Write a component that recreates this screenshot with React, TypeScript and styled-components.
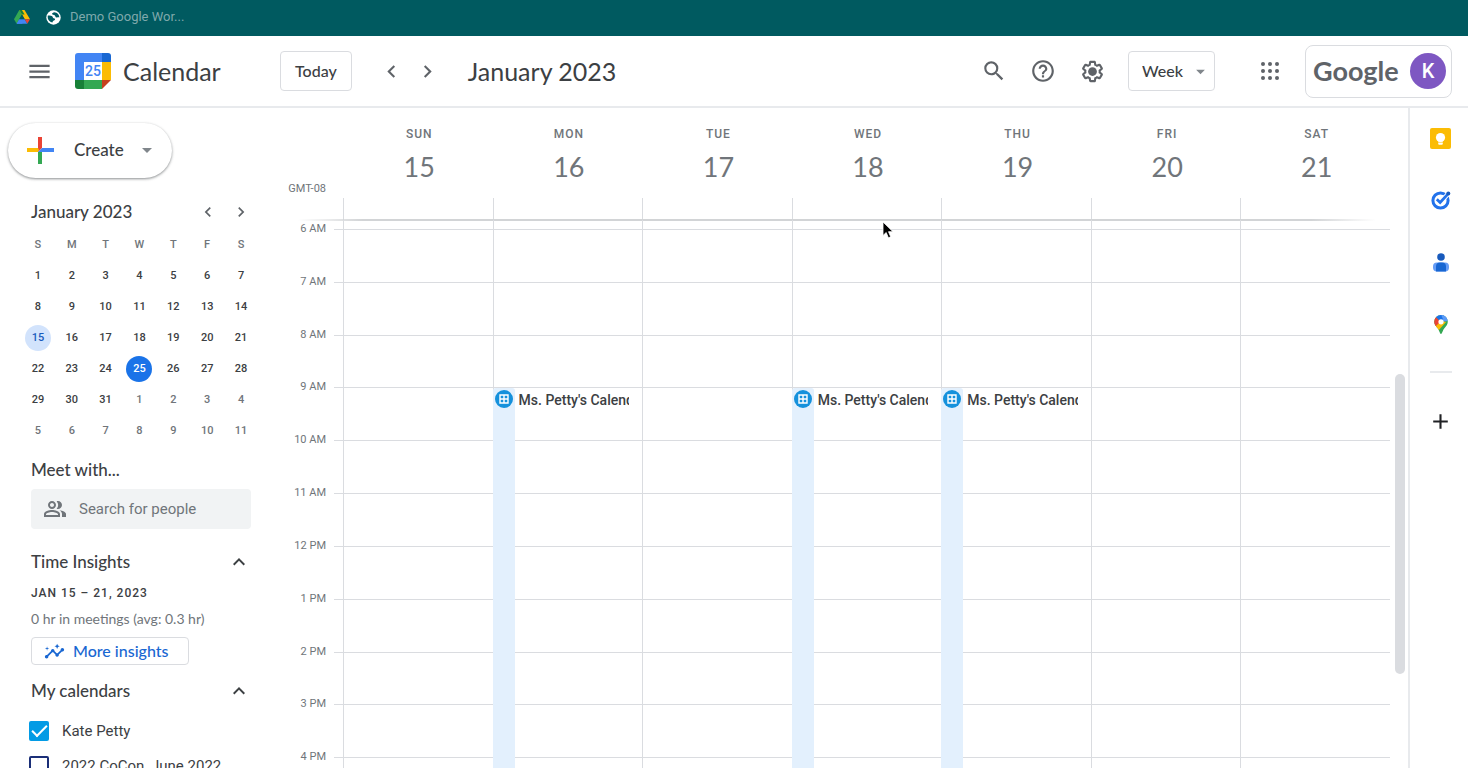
import React from "react";
import styled, { createGlobalStyle } from "styled-components";
import {
  MdSearch,
  MdHelpOutline,
  MdChevronLeft,
  MdChevronRight,
  MdArrowDropDown,
  MdExpandLess,
  MdOutlinePeopleAlt,
  MdInsights,
  MdAdd,
  MdMenu,
} from "react-icons/md";

const display = `Lato, "Open Sans", sans-serif`;
const body = `Roboto, "Liberation Sans", sans-serif`;
const ink = "#3c4043";
const muted = "#70757a";
const line = "#dadce0";

const GlobalStyle = createGlobalStyle`
  *, *::before, *::after { box-sizing: border-box; }
  body { margin: 0; background: #fff; color: ${ink}; font-family: ${body}; }
  button, input, select { font: inherit; color: inherit; }
  button { padding: 0; border: 0; background: none; cursor: pointer; }
  h1, h2, h3, p { margin: 0; font-weight: 400; }
  svg { display: block; flex: none; }
`;

const Page = styled.div`
  display: flex;
  flex-direction: column;
  height: 100vh;
  overflow: hidden;
`;

const BookmarkBar = styled.nav`
  display: flex;
  align-items: center;
  flex: none;
  gap: 16px;
  height: 36px;
  padding: 0 14px 2px;
  background: #005a60;
`;

const Bookmark = styled.a`
  display: flex;
  align-items: center;
  gap: 9px;
  color: #7fa9ac;
  font-size: 13px;
  line-height: 16px;
  text-decoration: none;
`;

const TopBar = styled.header`
  display: flex;
  align-items: center;
  flex: none;
  height: 72px;
  padding: 0 16px 0 27px;
  border-bottom: 2px solid #e8eaed;
`;

const IconButton = styled.button<{ $size?: number; $tone?: string }>`
  display: flex;
  align-items: center;
  justify-content: center;
  flex: none;
  width: ${(p) => p.$size ?? 36}px;
  height: ${(p) => p.$size ?? 36}px;
  color: ${(p) => p.$tone ?? "#5f6368"};
`;

const Brand = styled.div`
  display: flex;
  align-items: center;
  gap: 12px;
  width: 205px;
  margin-left: 24px;
`;

const BrandName = styled.h1`
  font: 400 25px/32px ${display};
`;

const OutlineButton = styled.button`
  display: flex;
  align-items: center;
  justify-content: center;
  height: 40px;
  padding: 0 14px;
  border: 1px solid ${line};
  border-radius: 4px;
  font: 500 16px/20px ${display};
`;

const Pager = styled.div`
  display: flex;
  margin: 0 22px;
`;

const RangeTitle = styled.h2`
  flex: 1;
  font: 400 25px/32px ${display};
  white-space: nowrap;
`;

const Tools = styled.div`
  display: flex;
  align-items: center;
  gap: 13px;
`;

const ViewPicker = styled.div`
  display: grid;
  align-items: center;
  width: 87px;
  height: 40px;
  margin: 0 37px 0 18px;
  border: 1px solid ${line};
  border-radius: 4px;

  > * { grid-area: 1 / 1; }
  > svg { justify-self: end; margin-right: 3px; color: #80868b; pointer-events: none; }
`;

const ViewSelect = styled.select`
  width: 100%;
  height: 100%;
  padding: 0 13px;
  border: 0;
  background: none;
  appearance: none;
  font: 500 16px/20px ${display};
`;

const Account = styled.div`
  display: flex;
  align-items: center;
  justify-content: space-between;
  width: 147px;
  height: 53px;
  margin-left: 17px;
  padding: 0 5px 0 7px;
  border: 1px solid ${line};
  border-radius: 8px;
`;

const Wordmark = styled.span`
  color: #5f6368;
  font: 700 27px/36px ${display};
`;

const Avatar = styled.button`
  width: 36px;
  height: 36px;
  border-radius: 50%;
  background: #7e57c2;
  color: #fff;
  font: 500 20px/36px ${body};
`;

const Content = styled.div`
  display: flex;
  flex: 1;
  min-height: 0;
`;

const Sidebar = styled.aside`
  flex: none;
  width: 280px;
  padding-top: 15px;
  overflow: hidden;
`;

const CreateButton = styled.button`
  display: flex;
  align-items: center;
  width: 164px;
  height: 55px;
  margin-left: 8px;
  padding: 0 13px 1px 19px;
  border-radius: 28px;
  box-shadow: 0 1px 3px rgba(60, 64, 67, 0.4), 0 1px 2px rgba(60, 64, 67, 0.24);
  font: 500 17px/20px ${display};

  > span { flex: 1; margin-left: 20px; text-align: left; }
  > svg:last-child { color: #80868b; }
`;

const MiniHeader = styled.div`
  display: flex;
  align-items: center;
  height: 34px;
  margin-top: 17px;
  padding: 0 23px 0 31px;
`;

const PanelTitle = styled.h3`
  flex: 1;
  font: 500 17px/20px ${display};
`;

const MiniCalendar = styled.table`
  width: 237px;
  margin-left: 21px;
  border-collapse: collapse;
  table-layout: fixed;
  text-align: center;
`;

const WeekdayCell = styled.th`
  height: 31px;
  padding: 0;
  color: ${muted};
  font: 500 11px/16px ${body};
`;

const DateCell = styled.td`
  height: 31px;
  padding: 0;
`;

type DateKind = "normal" | "outside" | "selected" | "today";
const dateTone: Record<DateKind, [string, string]> = {
  normal: [ink, "transparent"],
  outside: [muted, "transparent"],
  selected: ["#185abc", "#d2e3fc"],
  today: ["#fff", "#1a73e8"],
};

const DateButton = styled.button<{ $kind: DateKind }>`
  display: block;
  width: 26px;
  height: 26px;
  margin: 0 auto;
  border-radius: 50%;
  color: ${(p) => dateTone[p.$kind][0]};
  background: ${(p) => dateTone[p.$kind][1]};
  font: 500 11px/26px ${body};
`;

const Panel = styled.section`
  display: flex;
  flex-direction: column;
  align-items: flex-start;
  padding: 0 29px 0 31px;
  margin-top: 14px;
`;

const PanelHeader = styled.div`
  display: flex;
  align-items: center;
  width: 100%;
  height: 20px;
`;

const PeopleSearch = styled.label`
  display: flex;
  align-items: center;
  gap: 12px;
  width: 100%;
  height: 40px;
  margin: 9px 0;
  padding: 0 12px;
  border-radius: 4px;
  background: #f1f3f4;
  color: ${muted};
`;

const PeopleInput = styled.input`
  flex: 1;
  min-width: 0;
  padding: 0;
  border: 0;
  outline: 0;
  background: none;
  font-size: 15px;
  &::placeholder { color: ${muted}; opacity: 1; }
`;

const InsightRange = styled.p`
  margin-top: 11px;
  font: 500 12px/20px ${body};
  letter-spacing: 1px;
`;

const InsightNote = styled.p`
  margin-top: 6px;
  color: ${muted};
  font: 400 14px/20px ${display};
`;

const InsightButton = styled.button`
  display: flex;
  align-items: center;
  gap: 8px;
  width: 158px;
  height: 28px;
  margin: 8px 0 2px;
  padding: 0 12px;
  border: 1px solid ${line};
  border-radius: 4px;
  color: #1967d2;
  font: 500 16px/20px ${display};
`;

const CalendarList = styled.div`
  display: flex;
  flex-direction: column;
  margin: 12px 0 0 -2px;
`;

const CalendarItem = styled.label`
  display: flex;
  align-items: center;
  gap: 13px;
  height: 35px;
  font-size: 15px;
  white-space: nowrap;
`;

const CheckBox = styled.input<{ $color: string }>`
  appearance: none;
  display: grid;
  place-items: center;
  width: 20px;
  height: 20px;
  margin: 0;
  border: 2px solid ${(p) => p.$color};
  border-radius: 2px;

  &:checked { background: ${(p) => p.$color}; }
  &:checked::after {
    content: "";
    width: 15px;
    height: 8px;
    border: solid #fff;
    border-width: 0 0 2px 2px;
    transform: translateY(-2px) rotate(-45deg);
  }
`;

const Week = styled.main`
  position: relative;
  display: flex;
  flex-direction: column;
  flex: 1;
  min-width: 0;
`;

const WeekHead = styled.div`
  display: grid;
  grid-template-columns: 63px repeat(7, 1fr);
  flex: none;
  height: 112px;
  padding-right: 18px;
`;

const Zone = styled.span`
  align-self: end;
  padding: 0 17px 23px 0;
  color: ${muted};
  font-size: 11px;
  line-height: 16px;
  text-align: right;
`;

const DayHead = styled.div`
  display: flex;
  flex-direction: column;
  align-items: center;
  padding-top: 18px;
  color: ${muted};
`;

const DayName = styled.span`
  padding-left: 3px;
  font: 500 12px/16px ${body};
  letter-spacing: 1px;
`;

const DayNumber = styled.span`
  margin-top: 7px;
  padding-left: 3px;
  font: 400 27px/36px ${display};
`;

const DayStub = styled.span`
  align-self: stretch;
  flex: 1;
  margin-top: 13px;
  border-left: 1px solid ${line};
`;

const HeadShadow = styled.div`
  flex: none;
  height: 2px;
  margin: -1px 32px -1px 18px;
  background: linear-gradient(90deg, transparent, #d2d4d6 6%, #d2d4d6 94%, transparent);
`;

const WeekBody = styled.div`
  display: flex;
  flex: 1;
  min-height: 0;
  overflow: hidden;
`;

const Timeline = styled.div`
  display: grid;
  grid-template-columns: 46px 8px 9px repeat(7, 1fr);
  grid-template-rows: 9px repeat(11, 1fr);
  flex: 1;
  height: 590px;
`;

const HourLabel = styled.span<{ $row: number }>`
  grid-area: ${(p) => p.$row} / 1;
  margin-top: -8px;
  color: ${muted};
  font-size: 11px;
  line-height: 16px;
  text-align: right;
  white-space: nowrap;
`;

const HourLine = styled.div<{ $row: number }>`
  grid-area: ${(p) => p.$row} / 3 / auto / -1;
  border-top: 1px solid ${line};
`;

const DayColumn = styled.div<{ $day: number }>`
  grid-area: 1 / ${(p) => p.$day + 4} / -1 / auto;
  border-left: 1px solid ${line};
`;

const Event = styled.article<{ $day: number; $row: number }>`
  display: flex;
  grid-area: ${(p) => p.$row} / ${(p) => p.$day + 4} / -1 / auto;
  gap: 4px;
  margin: 1px 13px 0 0;
  overflow: hidden;
`;

const EventStripe = styled.div`
  display: flex;
  justify-content: center;
  flex: none;
  width: 22px;
  padding-top: 2px;
  border-radius: 3px 3px 0 0;
  background: #e3f0fd;
`;

const EventTitle = styled.span`
  overflow: hidden;
  padding-top: 3px;
  font: 500 14px/18px ${body};
  white-space: nowrap;
`;

const Track = styled.div`
  flex: none;
  width: 18px;
  padding: 154px 3px 0 5px;
`;

const Thumb = styled.div`
  height: 300px;
  border-radius: 5px;
  background: ${line};
`;

const Pointer = styled.svg`
  position: absolute;
  top: 113px;
  left: 602px;
`;

const Rail = styled.aside`
  display: flex;
  flex-direction: column;
  align-items: center;
  flex: none;
  gap: 26px;
  width: 60px;
  padding: 12px 0 0 3px;
  border-left: 2px solid #e8eaed;
`;

const RailDivider = styled.hr`
  width: 22px;
  height: 2px;
  margin: 3px 0 4px;
  border: 0;
  background: #e8eaed;
`;

const DriveLogo = () => (
  <svg width="16" height="14" viewBox="0 0 16 14">
    <path d="M5.3 0h5.2L8 4.5z" fill="#188038" />
    <path d="M5.3 0 8 4.6 2.7 13.8 0 9.2z" fill="#34a853" />
    <path d="M10.5 0 16 9.2h-5.3L5.3 0z" fill="#fbbc04" />
    <path d="M5.3 0h2.6l2.7 4.6L8 4.6z" fill="#188038" />
    <path d="M5.3 9.2h5.4l-2.6 4.6H2.7z" fill="#4285f4" />
    <path d="M10.7 9.2l2.6 4.6H2.7l2.6-4.6z" fill="#4285f4" />
    <path d="M10.7 9.2H16l-2.7 4.6z" fill="#ea4335" />
    <path d="M8 4.6l2.7 4.6H5.3z" fill="#005a60" />
  </svg>
);

const Globe = () => (
  <svg width="15" height="15" viewBox="0 0 15 15">
    <circle cx="7.5" cy="7.5" r="7.2" fill="#fff" />
    <path
      d="M1.800 5.600c1.600-.2 3.400-.2 4.400.6 1 .9.300 1.700 1.500 2 1.400.3 1.800 1 1 1.900-.8.800-2 .7-2.300 2.400-2.300-.3-4.200-2-4.600-4.200-.1-1-.2-1.800 0-2.700z"
      fill="#005a60"
    />
    <path
      d="M8.300 2.200c-1 .3-2.400.8-2.200 1.700.2 1 1.800.5 2.600 1.300.8.900.5 2 1.800 2.200 1 .2 1.800-.3 2.800.2.200-2.700-2-5.200-5-5.400z"
      fill="#005a60"
    />
  </svg>
);

const CalendarLogo = () => (
  <svg width="36" height="36" viewBox="0 0 36 36">
    <path d="M3 0h24v9H9v18H0V3a3 3 0 0 1 3-3z" fill="#4285f4" />
    <path d="M27 0h6a3 3 0 0 1 3 3v6h-9z" fill="#1967d2" />
    <path d="M27 9h9v18h-9z" fill="#fbbc04" />
    <path d="M9 27h18v9H9z" fill="#34a853" />
    <path d="M0 27h9v9H3a3 3 0 0 1-3-3z" fill="#188038" />
    <path d="M27 27h9l-9 9z" fill="#c5411f" />
    <path d="M9 9h18v18H9z" fill="#fff" />
    <text x="18" y="23" textAnchor="middle" fontFamily="Roboto, sans-serif" fontSize="14" fontWeight="500" fill="#4285f4">
      25
    </text>
  </svg>
);

const Gear = () => (
  <svg width="25" height="25" viewBox="0 0 24 24" fill="currentColor">
    <path d="M13.85 22.25h-3.7c-.74 0-1.36-.54-1.45-1.27l-.27-1.89c-.27-.14-.53-.29-.79-.46l-1.8.72c-.7.26-1.47-.03-1.81-.65L2.2 15.53c-.35-.66-.2-1.44.36-1.88l1.53-1.19c-.01-.15-.02-.3-.02-.46 0-.15.01-.31.02-.46l-1.52-1.19c-.59-.45-.74-1.26-.37-1.88l1.85-3.19c.34-.62 1.11-.9 1.79-.63l1.81.73c.26-.17.52-.32.78-.46l.27-1.91c.09-.7.71-1.25 1.44-1.25h3.7c.74 0 1.36.54 1.45 1.27l.27 1.89c.27.14.53.29.79.46l1.8-.72c.71-.26 1.48.03 1.82.65l1.84 3.18c.36.66.2 1.44-.36 1.88l-1.52 1.19c.01.15.02.3.02.46s-.01.31-.02.46l1.52 1.19c.56.45.72 1.23.37 1.86l-1.86 3.22c-.34.62-1.11.9-1.8.63l-1.8-.72c-.26.17-.52.32-.78.46l-.27 1.91c-.1.68-.72 1.22-1.46 1.22zm-3.23-2h2.76l.37-2.55.53-.22c.44-.18.88-.44 1.34-.78l.45-.34 2.38.96 1.38-2.4-2.03-1.58.07-.56c.03-.26.06-.51.06-.78s-.03-.53-.06-.78l-.07-.56 2.03-1.58-1.39-2.4-2.39.96-.45-.35c-.42-.32-.87-.58-1.33-.77l-.52-.22-.37-2.55h-2.76l-.37 2.55-.53.21c-.44.19-.88.44-1.34.79l-.45.33-2.38-.95-1.39 2.39 2.03 1.58-.07.56a7 7 0 0 0-.06.79c0 .26.02.53.06.78l.07.56-2.03 1.58 1.38 2.4 2.39-.96.45.35c.43.33.86.58 1.33.77l.53.22.38 2.55z" />
    <circle cx="12" cy="12" r="4.200" />
  </svg>
);

const AppsGrid = () => (
  <svg width="18" height="18" viewBox="0 0 18 18" fill="currentColor">
    {[2, 9, 16].map((y) => [2, 9, 16].map((x) => <circle key={`${x}-${y}`} cx={x} cy={y} r="2" />))}
  </svg>
);

const PlusLogo = () => (
  <svg width="27" height="27" viewBox="0 0 27 27">
    <path d="M11 0h4v11l-4 4z" fill="#ea4335" />
    <path d="M0 11h11l1 2-1 2H0z" fill="#fbbc04" />
    <path d="M11 15h4v12h-4z" fill="#34a853" />
    <path d="M15 11h12v4H11z" fill="#4285f4" />
  </svg>
);

const KeepLogo = () => (
  <svg width="21" height="21" viewBox="0 0 21 21">
    <rect width="21" height="21" rx="2" fill="#fbbc04" />
    <circle cx="10.500" cy="9.500" r="4.600" fill="#fff" />
    <path d="M8 11h5v2.600H8zM8.200 14.500h4.600v1.200a1 1 0 0 1-1 1H9.200a1 1 0 0 1-1-1z" fill="#fff" />
  </svg>
);

const TasksLogo = () => (
  <svg width="20" height="20" viewBox="0 0 20 20" fill="none">
    <circle cx="9.500" cy="10.500" r="7.600" stroke="#2272eb" strokeWidth="3" />
    <path d="M9.100 12.500l8.200-8.900" stroke="#fff" strokeWidth="4.600" />
    <path d="M5.800 9.300l3.300 3.200 8.200-8.900" stroke="#2272eb" strokeWidth="2.800" />
    <circle cx="17.300" cy="3.500" r="2" fill="#185abc" />
  </svg>
);

const ContactsLogo = () => (
  <svg width="16" height="19" viewBox="0 0 16 19">
    <circle cx="8" cy="4" r="3.800" fill="#185abc" />
    <rect y="9.500" width="16" height="9" rx="4" fill="#669df6" />
    <path d="M3 13.500a4 4 0 0 1 4-4h2a4 4 0 0 1 4 4v5H3z" fill="#1967d2" />
  </svg>
);

const MapsLogo = () => (
  <svg width="14" height="19" viewBox="0 0 14 19">
    <defs>
      <clipPath id="pin">
        <path d="M7 0a6.700 6.700 0 0 1 6.800 6.800c0 3.100-2 4.600-3.600 6.700C8.600 15.700 8.100 19 7 19s-1.600-3.300-3.200-5.500C2.200 11.400.2 9.900.2 6.800A6.700 6.700 0 0 1 7 0z" />
      </clipPath>
    </defs>
    <g clipPath="url(#pin)">
      <path d="M0 0h14v19H0z" fill="#34a853" />
      <path d="M0 0h14v4L7 7z" fill="#4285f4" />
      <path d="M8 0h6v6l-7 1z" fill="#5c9bf7" />
      <path d="M0 0l2 2 5 5-6 7-1-4z" fill="#ea4335" />
      <path d="M2 2 7 0l2 4-2 3z" fill="#1a73e8" />
      <path d="M1 12 7 6l5 1-8 9z" fill="#fbbc04" />
    </g>
    <circle cx="7" cy="6.800" r="2.600" fill="#fff" />
  </svg>
);

const EventIcon = () => (
  <svg width="18" height="18" viewBox="0 0 18 18">
    <circle cx="9" cy="9" r="9" fill="#1591dc" />
    <path d="M5 5h8v8H5zM9 5v8M5 9h8" fill="none" stroke="#fff" strokeWidth="1.400" />
  </svg>
);

const days = [
  ["SUN", 15],
  ["MON", 16],
  ["TUE", 17],
  ["WED", 18],
  ["THU", 19],
  ["FRI", 20],
  ["SAT", 21],
] as const;

const hours = ["6 AM", "7 AM", "8 AM", "9 AM", "10 AM", "11 AM", "12 PM", "1 PM", "2 PM", "3 PM", "4 PM"];
const eventDays = [1, 3, 4];

const miniWeeks = Array.from({ length: 6 }, (_, week) =>
  Array.from({ length: 7 }, (_, day) => {
    const n = week * 7 + day + 1;
    const kind: DateKind = n > 31 ? "outside" : n === 15 ? "selected" : n === 25 ? "today" : "normal";
    return { label: n > 31 ? n - 31 : n, kind };
  }),
);

export default function App() {
  return (
    <Page>
      <GlobalStyle />
      <BookmarkBar aria-label="Bookmarks">
        <Bookmark href="#drive" aria-label="Drive">
          <DriveLogo />
        </Bookmark>
        <Bookmark href="#demo">
          <Globe />
          Demo Google Wor...
        </Bookmark>
      </BookmarkBar>

      <TopBar>
        <IconButton $size={24} aria-label="Main menu">
          <MdMenu size={27} />
        </IconButton>
        <Brand>
          <CalendarLogo />
          <BrandName>Calendar</BrandName>
        </Brand>
        <OutlineButton>Today</OutlineButton>
        <Pager>
          <IconButton aria-label="Previous week">
            <MdChevronLeft size={25} />
          </IconButton>
          <IconButton aria-label="Next week">
            <MdChevronRight size={25} />
          </IconButton>
        </Pager>
        <RangeTitle>January 2023</RangeTitle>
        <Tools>
          <IconButton aria-label="Search">
            <MdSearch size={26} />
          </IconButton>
          <IconButton aria-label="Support">
            <MdHelpOutline size={26} />
          </IconButton>
          <IconButton aria-label="Settings">
            <Gear />
          </IconButton>
        </Tools>
        <ViewPicker>
          <ViewSelect aria-label="View" defaultValue="Week">
            <option>Day</option>
            <option>Week</option>
            <option>Month</option>
          </ViewSelect>
          <MdArrowDropDown size={21} />
        </ViewPicker>
        <IconButton aria-label="Google apps">
          <AppsGrid />
        </IconButton>
        <Account>
          <Wordmark>Google</Wordmark>
          <Avatar aria-label="Account">K</Avatar>
        </Account>
      </TopBar>

      <Content>
        <Sidebar>
          <CreateButton>
            <PlusLogo />
            <span>Create</span>
            <MdArrowDropDown size={24} />
          </CreateButton>

          <MiniHeader>
            <PanelTitle>January 2023</PanelTitle>
            <IconButton $size={33} aria-label="Previous month">
              <MdChevronLeft size={20} />
            </IconButton>
            <IconButton $size={33} aria-label="Next month">
              <MdChevronRight size={20} />
            </IconButton>
          </MiniHeader>
          <MiniCalendar>
            <thead>
              <tr>
                {["S", "M", "T", "W", "T", "F", "S"].map((d, i) => (
                  <WeekdayCell key={i}>{d}</WeekdayCell>
                ))}
              </tr>
            </thead>
            <tbody>
              {miniWeeks.map((week, i) => (
                <tr key={i}>
                  {week.map((d) => (
                    <DateCell key={d.label}>
                      <DateButton $kind={d.kind}>{d.label}</DateButton>
                    </DateCell>
                  ))}
                </tr>
              ))}
            </tbody>
          </MiniCalendar>

          <Panel>
            <PanelTitle>Meet with...</PanelTitle>
            <PeopleSearch>
              <MdOutlinePeopleAlt size={24} />
              <PeopleInput placeholder="Search for people" aria-label="Search for people" />
            </PeopleSearch>
          </Panel>

          <Panel>
            <PanelHeader>
              <PanelTitle>Time Insights</PanelTitle>
              <IconButton $size={24} $tone={ink} aria-label="Collapse Time Insights">
                <MdExpandLess size={24} />
              </IconButton>
            </PanelHeader>
            <InsightRange>JAN 15 – 21, 2023</InsightRange>
            <InsightNote>0 hr in meetings (avg: 0.3 hr)</InsightNote>
            <InsightButton>
              <MdInsights size={21} />
              More insights
            </InsightButton>
          </Panel>

          <Panel>
            <PanelHeader>
              <PanelTitle>My calendars</PanelTitle>
              <IconButton $size={24} $tone={ink} aria-label="Collapse My calendars">
                <MdExpandLess size={24} />
              </IconButton>
            </PanelHeader>
            <CalendarList>
              <CalendarItem>
                <CheckBox type="checkbox" $color="#039be5" defaultChecked />
                Kate Petty
              </CalendarItem>
              <CalendarItem>
                <CheckBox type="checkbox" $color="#1b2f78" />
                2022 CoCon, June 2022
              </CalendarItem>
            </CalendarList>
          </Panel>
        </Sidebar>

        <Week>
          <WeekHead>
            <Zone>GMT-08</Zone>
            {days.map(([name, date]) => (
              <DayHead key={name}>
                <DayName>{name}</DayName>
                <DayNumber>{date}</DayNumber>
                <DayStub />
              </DayHead>
            ))}
          </WeekHead>
          <HeadShadow />
          <WeekBody>
            <Timeline>
              {hours.map((h, i) => (
                <React.Fragment key={h}>
                  <HourLabel $row={i + 2}>{h}</HourLabel>
                  <HourLine $row={i + 2} />
                </React.Fragment>
              ))}
              {days.map(([name], i) => (
                <DayColumn key={name} $day={i} />
              ))}
              {eventDays.map((d) => (
                <Event key={d} $day={d} $row={5}>
                  <EventStripe>
                    <EventIcon />
                  </EventStripe>
                  <EventTitle>Ms. Petty's Calendar</EventTitle>
                </Event>
              ))}
            </Timeline>
            <Track>
              <Thumb />
            </Track>
          </WeekBody>
          <Pointer width="12" height="19" viewBox="0 0 12 19">
            <path d="M1 1v13.500l3.200-3 2.200 5.300 2.300-1-2.200-5.100H11z" fill="#000" stroke="#fff" strokeWidth="0.800" />
          </Pointer>
        </Week>

        <Rail>
          <IconButton aria-label="Keep">
            <KeepLogo />
          </IconButton>
          <IconButton aria-label="Tasks">
            <TasksLogo />
          </IconButton>
          <IconButton aria-label="Contacts">
            <ContactsLogo />
          </IconButton>
          <IconButton aria-label="Maps">
            <MapsLogo />
          </IconButton>
          <RailDivider />
          <IconButton $tone="#202124" aria-label="Get add-ons">
            <MdAdd size={25} />
          </IconButton>
        </Rail>
      </Content>
    </Page>
  );
}
